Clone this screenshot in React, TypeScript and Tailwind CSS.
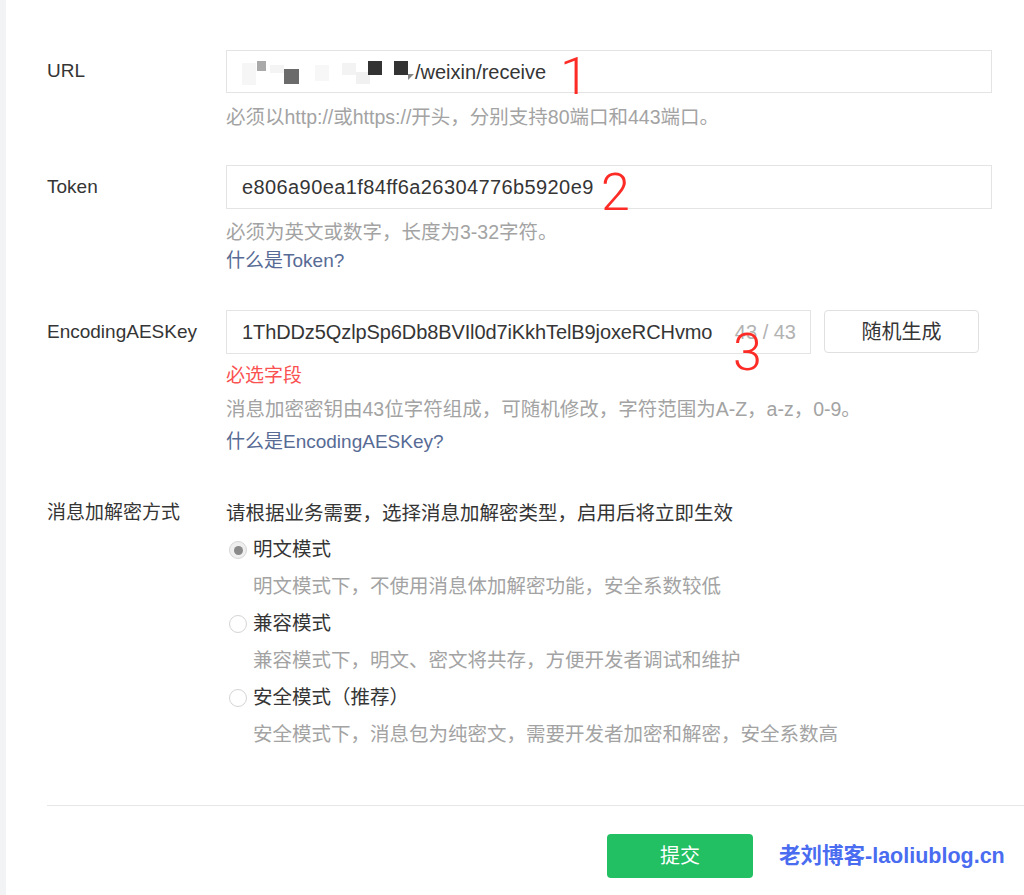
import React from 'react';

const font = { fontFamily: '"Liberation Sans", "Noto Sans CJK SC", sans-serif' };

// pixelated (mosaic) part of the URL host
const Mosaic = () => (
    <svg width="173" height="30" viewBox="0 0 173 30" className="shrink-0">
        <rect x="0" y="6" width="14" height="22" fill="#f6f6f6" />
        <rect x="15" y="4" width="9" height="10" fill="#a9a9a9" />
        <rect x="28" y="8" width="14" height="8" fill="#f4f4f4" />
        <rect x="42" y="12" width="15" height="15" fill="#6b6b6b" />
        <rect x="73" y="8" width="14" height="16" fill="#f7f7f7" />
        <rect x="100" y="6" width="14" height="12" fill="#f3f3f3" />
        <rect x="114" y="15" width="14" height="12" fill="#f1f1f1" />
        <rect x="126" y="4" width="14" height="14" fill="#333333" />
        <rect x="152" y="4" width="14" height="14" fill="#333333" />
        <polygon points="166,17 172,17 166,23" fill="#888888" />
    </svg>
);

const Mark = ({ n, className }: { n: string; className: string }) => (
    <span
        className={`absolute text-[52px] leading-none font-light text-[#fc2b26] pointer-events-none ${className}`}
        style={{ fontFamily: 'Roboto, "Liberation Sans", sans-serif' }}
    >
        {n}
    </span>
);

const Radio = ({ checked, label, desc, first }: { checked?: boolean; label: string; desc: string; first?: boolean }) => (
    <div className={first ? 'mt-[9px]' : 'mt-[10px]'}>
        <div className="flex items-center h-[28px] text-[19.5px] text-[#353535]">
            <span
                className={`ml-[3px] w-[18px] h-[18px] rounded-full border flex items-center justify-center ${
                    checked ? 'border-[#d6d6d6] bg-[#efefef]' : 'border-[#d4d4d4] bg-white'
                }`}
            >
                {checked && <span className="w-[9px] h-[9px] rounded-full bg-[#8a8a8a]" />}
            </span>
            <span className="ml-[6px]">{label}</span>
        </div>
        <div className="mt-[8px] pl-[27px] leading-[28px] text-[19.5px] text-[#a3a3a3]">{desc}</div>
    </div>
);

export default function App() {
    return (
        <div className="flex min-h-[895px] bg-white" style={font}>
            <div className="w-[6px] bg-[#f2f3f5] shrink-0" />
            <div className="flex-1 pt-[50px] pl-[41px]">
                {/* URL */}
                <div className="flex pr-[32px]">
                    <div className="w-[179px] h-[43px] flex items-center text-[19px] text-[#353535]">URL</div>
                    <div className="flex-1">
                        <div className="relative h-[43px] border border-[#e4e4e4] flex items-center pl-[15px] text-[20px] text-[#353535]">
                            <Mosaic />
                            <span>/weixin/receive</span>
                            <Mark n="1" className="left-[333px] top-[0px]" />
                        </div>
                        <div className="mt-[10px] leading-[28px] text-[19.5px] text-[#a3a3a3]">
                            必须以http://或https://开头，分别支持80端口和443端口。
                        </div>
                    </div>
                </div>

                {/* Token */}
                <div className="flex pr-[32px] mt-[34px]">
                    <div className="w-[179px] h-[44px] flex items-center text-[19px] text-[#353535]">Token</div>
                    <div className="flex-1">
                        <div className="relative h-[44px] border border-[#e4e4e4] flex items-center pl-[15px] text-[20px] text-[#353535]">
                            <span className="tracking-[0.4px]">e806a90ea1f84ff6a26304776b5920e9</span>
                            <Mark n="2" className="left-[374px] top-[1px]" />
                        </div>
                        <div className="mt-[9px] leading-[28px] text-[19.5px] text-[#a3a3a3]">必须为英文或数字，长度为3-32字符。</div>
                        <div className="leading-[30px] text-[19px] text-[#576b95]">什么是Token?</div>
                    </div>
                </div>

                {/* EncodingAESKey */}
                <div className="flex mt-[34px]">
                    <div className="w-[179px] h-[44px] flex items-center text-[19px] text-[#353535]">EncodingAESKey</div>
                    <div className="flex-1">
                        <div className="flex">
                            <div className="relative w-[585px] h-[44px] border border-[#e4e4e4] flex items-center justify-between pl-[15px] pr-[14px] text-[20px]">
                                <span className="text-[#353535] tracking-[-0.1px]">1ThDDz5QzlpSp6Db8BVIl0d7iKkhTelB9joxeRCHvmo</span>
                                <span className="text-[#b2b2b2]">43 / 43</span>
                                <Mark n="3" className="left-[506px] top-[16px]" />
                            </div>
                            <button className="ml-[13px] w-[155px] h-[43px] border border-[#e0e0e0] rounded-[4px] bg-white text-[20px] text-[#353535]">
                                随机生成
                            </button>
                        </div>
                        <div className="mt-[8px] leading-[28px] text-[19px] text-[#fa5151]">必选字段</div>
                        <div className="mt-[5px] leading-[28px] text-[19.5px] text-[#a3a3a3]">
                            消息加密密钥由43位字符组成，可随机修改，字符范围为A-Z，a-z，0-9。
                        </div>
                        <div className="mt-[5px] leading-[28px] text-[19px] text-[#576b95]">什么是EncodingAESKey?</div>
                    </div>
                </div>

                {/* 加解密方式 */}
                <div className="flex mt-[43px]">
                    <div className="w-[179px] leading-[28px] text-[19px] text-[#353535]">消息加解密方式</div>
                    <div className="flex-1">
                        <div className="leading-[28px] text-[19.5px] text-[#353535]">请根据业务需要，选择消息加解密类型，启用后将立即生效</div>
                        <Radio first checked label="明文模式" desc="明文模式下，不使用消息体加解密功能，安全系数较低" />
                        <Radio label="兼容模式" desc="兼容模式下，明文、密文将共存，方便开发者调试和维护" />
                        <Radio label="安全模式（推荐）" desc="安全模式下，消息包为纯密文，需要开发者加密和解密，安全系数高" />
                    </div>
                </div>

                <div className="mt-[57px] h-px bg-[#e6e6e6]" />

                <div className="flex items-center mt-[28px]">
                    <button className="ml-[560px] w-[146px] h-[44px] rounded-[4px] bg-[#22c063] text-white text-[20px]">提交</button>
                    <span className="ml-[26px] text-[21.5px] font-bold text-[#4a6cf0]">老刘博客-laoliublog.cn</span>
                </div>
            </div>
        </div>
    );
}
